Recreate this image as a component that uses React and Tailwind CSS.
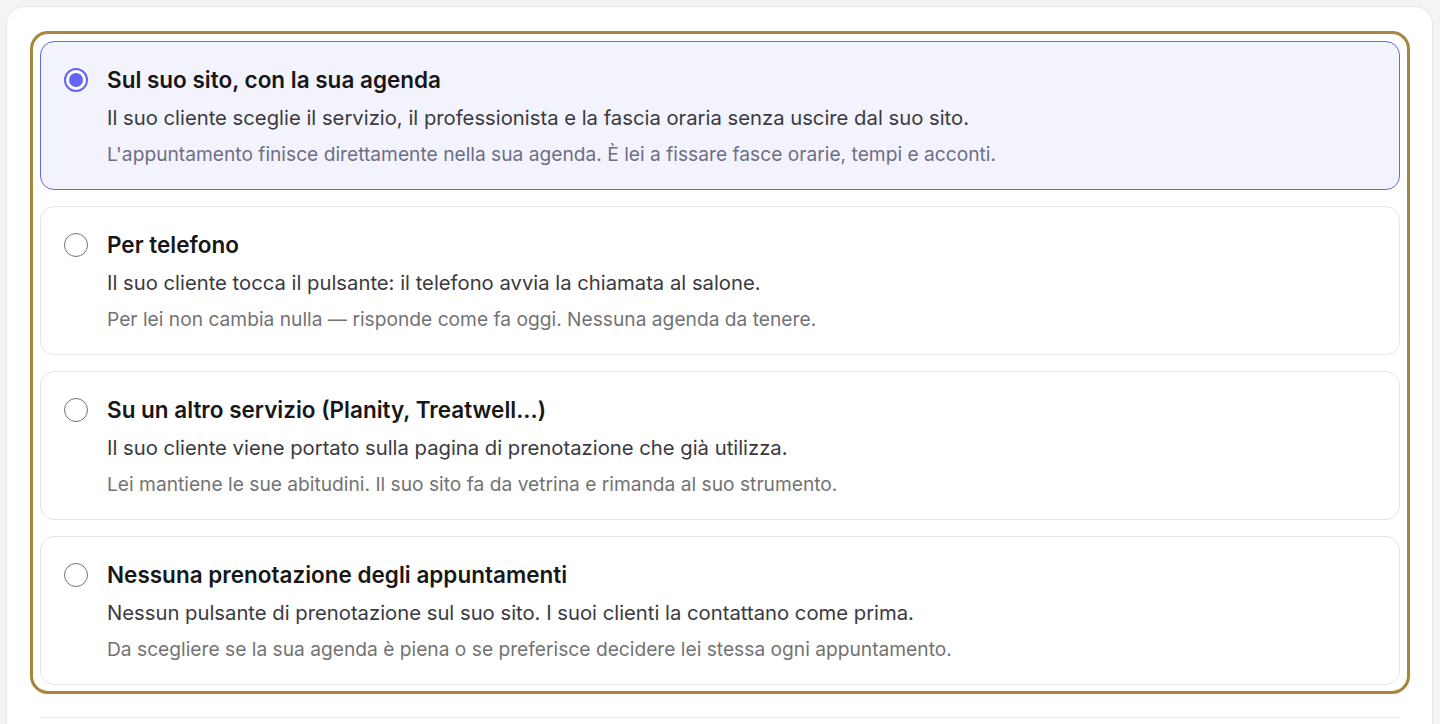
import React from 'react';

const options = [
  {
    id: 'agenda',
    title: 'Sul suo sito, con la sua agenda',
    text: 'Il suo cliente sceglie il servizio, il professionista e la fascia oraria senza uscire dal suo sito.',
    note: "L'appuntamento finisce direttamente nella sua agenda. È lei a fissare fasce orarie, tempi e acconti.",
  },
  {
    id: 'phone',
    title: 'Per telefono',
    text: 'Il suo cliente tocca il pulsante: il telefono avvia la chiamata al salone.',
    note: 'Per lei non cambia nulla — risponde come fa oggi. Nessuna agenda da tenere.',
  },
  {
    id: 'other',
    title: 'Su un altro servizio (Planity, Treatwell...)',
    text: 'Il suo cliente viene portato sulla pagina di prenotazione che già utilizza.',
    note: 'Lei mantiene le sue abitudini. Il suo sito fa da vetrina e rimanda al suo strumento.',
  },
  {
    id: 'none',
    title: 'Nessuna prenotazione degli appuntamenti',
    text: 'Nessun pulsante di prenotazione sul suo sito. I suoi clienti la contattano come prima.',
    note: 'Da scegliere se la sua agenda è piena o se preferisce decidere lei stessa ogni appuntamento.',
  },
];

function Radio({ checked }) {
  if (checked) {
    return (
      <span className="flex h-6 w-6 shrink-0 items-center justify-center rounded-full border-2 border-[#6366f1] bg-white">
        <span className="h-[14px] w-[14px] rounded-full bg-[#6366f1]" />
      </span>
    );
  }
  return <span className="h-6 w-6 shrink-0 rounded-full border-[1.5px] border-[#737373] bg-white" />;
}

function OptionCard({ option, checked, onSelect }) {
  return (
    <button
      type="button"
      onClick={onSelect}
      className={
        checked
          ? 'flex w-full flex-col rounded-[14px] border border-[#6366f1] bg-[#f3f3fe] pb-[23px] pl-[23px] pr-6 pt-6 text-left'
          : 'flex w-full flex-col rounded-[14px] border border-[#e5e5e5] bg-white pb-[23px] pl-[23px] pr-6 pt-6 text-left'
      }
    >
      <div className="flex h-[28px] items-center gap-[19px]">
        <Radio checked={checked} />
        <span className="text-[22.5px] font-semibold leading-[28px] text-[#171717]">{option.title}</span>
      </div>
      <p className="ml-[43px] mt-[10px] text-[20.25px] leading-[28px] text-[#3a3a40]">{option.text}</p>
      <p
        className={
          checked
            ? 'ml-[43px] mt-[10px] text-[19.2px] leading-[24px] text-[#6e6e85]'
            : 'ml-[43px] mt-[10px] text-[19.2px] leading-[24px] text-[#737373]'
        }
      >
        {option.note}
      </p>
    </button>
  );
}

export default function App() {
  const [selected, setSelected] = React.useState('agenda');

  return (
    <div className="min-h-screen bg-[#f4f4f5] pl-[6px] pt-[6px] font-['Inter','Noto_Sans',sans-serif]">
      <div className="w-[1427px] rounded-t-[18px] border border-b-0 border-[#e8e8e8] bg-white pb-10 pl-[23px] pt-6">
        <div className="w-[1380px] rounded-[18px] border-[3px] border-[#a8843c] px-[7px] pb-[6px] pt-[7px]">
          <div className="flex flex-col gap-4">
            {options.map(option => (
              <OptionCard
                key={option.id}
                option={option}
                checked={selected === option.id}
                onSelect={() => setSelected(option.id)}
              />
            ))}
          </div>
        </div>
        <div className="ml-[10px] mt-[23px] w-[1360px] border-t border-[#e5e5e5]" />
      </div>
    </div>
  );
}
